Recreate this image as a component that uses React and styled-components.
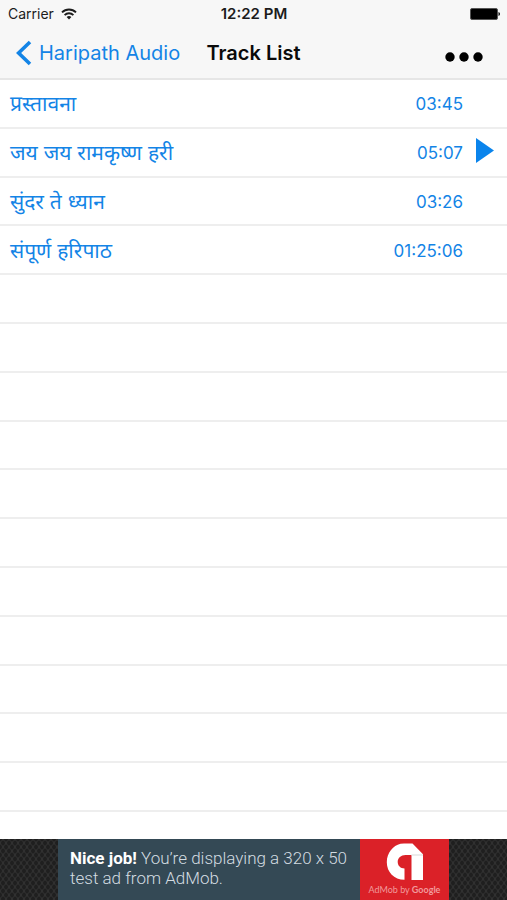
import React from 'react';
import styled, {createGlobalStyle, ThemeProvider} from 'styled-components';

const theme = {
  tint: '#1384e6',
  barBg: '#f7f7f7',
  barBorder: '#e6e6e6',
  separator: '#eeeeee',
  adBg: '#344955',
  adBrand: '#db2128',
  font: 'Inter, "Noto Sans", "Noto Sans Devanagari", sans-serif'
};

const ROW_COUNT = 15;

const TRACKS = [
  {title: 'प्रस्तावना', duration: '03:45'},
  {title: 'जय जय रामकृष्ण हरी', duration: '05:07', playing: true},
  {title: 'सुंदर ते ध्यान', duration: '03:26'},
  {title: 'संपूर्ण हरिपाठ', duration: '01:25:06'}
];

const GlobalStyle = createGlobalStyle`
  * {
    box-sizing: border-box;
  }

  body {
    margin: 0;
    background-color: #fff;
  }

  button {
    border: 0;
    padding: 0;
    background: none;
    font: inherit;
    color: inherit;
    cursor: pointer;
  }
`;

const Screen = styled.div`
  display: flex;
  flex-direction: column;
  min-height: 100vh;
  font-family: ${props => props.theme.font};
`;

const TopBar = styled.header`
  background-color: ${props => props.theme.barBg};
  border-bottom: 2px solid ${props => props.theme.barBorder};
`;

const StatusBar = styled.div`
  display: grid;
  grid-template-columns: 1fr auto 1fr;
  align-items: center;
  height: 27px;
  padding: 0 7px 0 8px;
  font-size: 14px;
  color: #1c1c1c;
`;

const Carrier = styled.span`
  display: flex;
  align-items: center;
  gap: 7px;
`;

const Clock = styled.span`
  font-size: 15px;
  font-weight: 600;
`;

const BatteryIcon = styled.svg`
  justify-self: end;
`;

const NavBar = styled.nav`
  display: grid;
  grid-template-columns: 1fr auto 1fr;
  align-items: center;
  height: 51px;
  padding: 0 16px;
`;

const BackLink = styled.a`
  display: flex;
  align-items: center;
  gap: 7px;
  font-size: 20px;
  line-height: 24px;
  white-space: nowrap;
  text-decoration: none;
  color: ${props => props.theme.tint};
`;

const Title = styled.h1`
  margin: 0;
  font-size: 20px;
  line-height: 24px;
  font-weight: 600;
  color: #0a0a0a;
`;

const MoreButton = styled.button`
  display: flex;
  justify-self: end;
  padding: 8px 8px 0;
`;

const TrackList = styled.ul`
  flex: 1;
  display: flex;
  flex-direction: column;
  margin: 0;
  padding: 0 0 27px;
  list-style: none;
`;

const Row = styled.li`
  flex: 1 0 40px;
  display: flex;
  border-bottom: 2px solid ${props => props.theme.separator};
`;

const TrackButton = styled.button`
  flex: 1;
  display: grid;
  grid-template-columns: 1fr auto 18px;
  align-items: center;
  column-gap: 13px;
  padding: 2px 13px 0 10px;
  text-align: left;
  color: ${props => props.theme.tint};
`;

const TrackTitle = styled.span`
  font-size: 21px;
  line-height: 28px;
`;

const Duration = styled.span`
  font-size: 17px;
  line-height: 28px;
`;

const AdBanner = styled.footer`
  display: flex;
  justify-content: center;
  height: 61px;
  background-color: #303030;
  background-image: radial-gradient(#1f1f1f 35%, transparent 50%),
    radial-gradient(#1f1f1f 35%, transparent 50%);
  background-size: 6px 8px;
  background-position: 0 0, 3px 4px;
`;

const AdLink = styled.a`
  display: flex;
  text-decoration: none;
`;

const AdText = styled.p`
  width: 302px;
  margin: 0;
  padding: 9px 0 0 12px;
  background-color: ${props => props.theme.adBg};
  font-family: Roboto, sans-serif;
  font-size: 17px;
  font-weight: 300;
  line-height: 20px;
  white-space: nowrap;
  color: #d3dce1;

  strong {
    font-weight: 700;
    color: #fff;
  }
`;

const AdBrand = styled.span`
  display: flex;
  flex-direction: column;
  align-items: center;
  width: 89px;
  padding-top: 4px;
  background-color: ${props => props.theme.adBrand};
  font-family: Lato, sans-serif;
  font-size: 9px;
  line-height: 18px;
  color: #f19a9c;

  b {
    font-weight: 700;
  }
`;

function WifiIcon() {
  return (
    <svg width="16" height="12" viewBox="0 0 16 12" aria-hidden="true">
      <g fill="none" stroke="#1c1c1c" strokeWidth="1.9">
        <path d="M1 4.4a10 10 0 0 1 14 0" />
        <path d="M3.6 7.1a6.3 6.3 0 0 1 8.8 0" />
      </g>
      <path d="M5.6 9.1a3.5 3.5 0 0 1 4.8 0L8 11.6z" fill="#1c1c1c" />
    </svg>
  );
}

function Battery() {
  return (
    <BatteryIcon width="30" height="12" viewBox="0 0 30 12" role="img" aria-label="Battery full">
      <rect x="0.5" y="0.5" width="27" height="11" rx="1.5" fill="#000" stroke="#555" />
      <path d="M28.5 4q1.5 .5 1.5 2t-1.5 2z" fill="#000" />
    </BatteryIcon>
  );
}

function BackIcon() {
  return (
    <svg width="16" height="26" viewBox="0 0 16 26" aria-hidden="true">
      <path d="M14 2 2.6 13 14 24" fill="none" stroke="#1384e6" strokeWidth="3.6" />
    </svg>
  );
}

function MoreIcon() {
  return (
    <svg width="38" height="10" viewBox="0 0 38 10" aria-hidden="true">
      <circle cx="5" cy="5" r="4.7" />
      <circle cx="19" cy="5" r="4.7" />
      <circle cx="33" cy="5" r="4.7" />
    </svg>
  );
}

function PlayIcon() {
  return (
    <svg width="18" height="30" viewBox="0 0 18 30" role="img" aria-label="Playing">
      <path d="M0 0v25l18-12.5z" fill="#0a84ec" />
    </svg>
  );
}

function AdMobLogo() {
  return (
    <svg width="38" height="38" viewBox="0 0 38 38" aria-hidden="true">
      <path
        d="M18.5 36.8C8 36.8 .8 29 .8 19.2C.8 10 7 2.600 14.500 .8Q16 .4 18 .4H26.500L37 11.300V37H25.500V12H19.500C15 12 11.700 15 11.700 19C11.700 22.600 14.500 25.500 18.500 25.500z"
        fill="#fff"
      />
      <path d="M25.500 12H37" stroke="#d9d9d9" strokeWidth="1" />
    </svg>
  );
}

function TrackRow({track}) {
  return (
    <Row>
      <TrackButton type="button">
        <TrackTitle lang="mr">{track.title}</TrackTitle>
        <Duration>{track.duration}</Duration>
        {track.playing ? <PlayIcon /> : null}
      </TrackButton>
    </Row>
  );
}

export default function App() {
  const emptyRows = Array.from({length: ROW_COUNT - TRACKS.length});

  return (
    <ThemeProvider theme={theme}>
      <GlobalStyle />
      <Screen>
        <TopBar>
          <StatusBar>
            <Carrier>
              Carrier
              <WifiIcon />
            </Carrier>
            <Clock>12:22 PM</Clock>
            <Battery />
          </StatusBar>
          <NavBar>
            <BackLink href="#audio">
              <BackIcon />
              Haripath Audio
            </BackLink>
            <Title>Track List</Title>
            <MoreButton type="button" aria-label="More">
              <MoreIcon />
            </MoreButton>
          </NavBar>
        </TopBar>
        <TrackList>
          {TRACKS.map(track => (
            <TrackRow key={track.title} track={track} />
          ))}
          {emptyRows.map((_, i) => (
            <Row key={i} aria-hidden="true" />
          ))}
        </TrackList>
        <AdBanner>
          <AdLink href="#ad">
            <AdText>
              <strong>Nice job!</strong> You’re displaying a 320 x 50
              <br />
              test ad from AdMob.
            </AdText>
            <AdBrand>
              <AdMobLogo />
              <span>
                AdMob by <b>Google</b>
              </span>
            </AdBrand>
          </AdLink>
        </AdBanner>
      </Screen>
    </ThemeProvider>
  );
}
